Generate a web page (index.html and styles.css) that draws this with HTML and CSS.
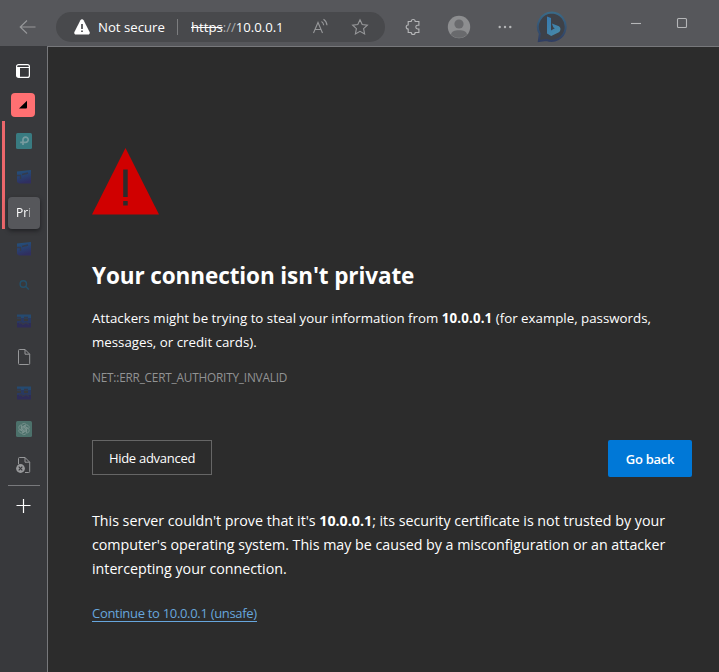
FILE: index.html
```html
<!DOCTYPE html>
<html lang="en">
<head>
<meta charset="utf-8">
<title>Privacy error</title>
<link rel="stylesheet" href="styles.css">
</head>
<body>
<div class="window">
  <header class="toolbar">
    <svg class="back" width="18" height="16" viewBox="0 0 18 16"><path d="M8 1.5 1.2 8 8 14.5M1.500 8H16.500"/></svg>
    <div class="address">
      <svg class="warn" width="18" height="16" viewBox="0 0 18 16"><path fill="#fff" d="M7.400 1.300a1.800 1.800 0 0 1 3.200 0l6 11.700a1.800 1.800 0 0 1-1.600 2.600H3A1.800 1.800 0 0 1 1.400 13z"/><path stroke="#48494c" stroke-width="1.700" d="M9 5v5M9 11.400v1.700"/></svg>
      <span class="status">Not secure</span>
      <span class="bar"></span>
      <span class="url"><s>https</s><i>://</i>10.0.0.1</span>
      <svg class="read" width="17" height="18" viewBox="0 0 17 18"><path d="M1.500 15 6 4.500 10.500 15M3 11.500h6M9.500 3.500c1.400.8 2 2 2.200 3.800M11.500 1.300c2.300 1.500 3.300 3.300 3.500 6"/></svg>
      <svg class="star" width="18" height="18" viewBox="0 0 18 18"><path d="m9 1.700 2.200 4.800 5.200.6-3.800 3.600 1 5.200L9 13.300l-4.600 2.600 1-5.200L1.600 7.100l5.200-.6z"/></svg>
    </div>
    <svg class="puzzle" width="16" height="18" viewBox="0 0 16 18"><path d="M3.200 3.500h3a2 2 0 0 1 4 0h3.700v3.700h-1.200a1.900 1.900 0 0 0 0 3.800h1.200v3.500h-3.700a2 2 0 0 1-4 0h-3V11a2 2 0 0 1 0-4z"/></svg>
    <svg class="avatar" width="24" height="24" viewBox="0 0 24 24"><circle cx="12" cy="12" r="11.200" fill="#8d8e90"/><circle cx="12" cy="9" r="4.600" fill="#696a6d"/><path fill="#696a6d" d="M4 19.400c.7-3 3.200-4.100 8-4.100s7.300 1.100 8 4.100a11.200 11.200 0 0 1-16 0z"/></svg>
    <svg class="dots" width="14" height="4" viewBox="0 0 14 4"><g fill="#b5b6b8"><circle cx="1.700" cy="2" r="1.200"/><circle cx="7" cy="2" r="1.200"/><circle cx="12.300" cy="2" r="1.200"/></g></svg>
    <svg class="bing" width="32" height="32" viewBox="0 0 32 32"><defs><linearGradient id="ring" x2="0" y2="1"><stop stop-color="#396a88"/><stop offset="1" stop-color="#303e61"/></linearGradient><linearGradient id="b" x2=".7" y2="1"><stop stop-color="#3679b0"/><stop offset="1" stop-color="#4789a7"/></linearGradient></defs><path fill="#3d4148" stroke="url(#ring)" stroke-width="2" d="M16 1.500a14.200 14.200 0 1 1-5.500 27.500L2.800 30l1-7.200A14.200 14.200 0 0 1 16 1.500z"/><path fill="url(#b)" d="m11 5.500 4 1.500v12.500l3.800-2.200-1.400-.8-1.500-4 7 2.700c2.400 1.500 1.800 4.800 0 6L15.200 25 11 22.500z"/></svg>
    <svg class="minimize" width="12" height="12" viewBox="0 0 12 12"><path d="M1 6.500h10"/></svg>
    <svg class="maximize" width="12" height="12" viewBox="0 0 12 12"><rect x="1.500" y="1.500" width="9" height="9" rx="1"/></svg>
  </header>
  <div class="body">
    <nav class="tabs">
      <div class="tab panel"><svg width="16" height="16" viewBox="0 0 16 16"><rect x="1.600" y="1.600" width="12.800" height="12.800" rx="2" fill="none" stroke="#fff" stroke-width="1.200"/><path d="M2 4.500h12" stroke="#fff"/><path d="M2 4.500h3v9.500H2z" fill="#fff"/></svg></div>
      <div class="tab group"><span><svg width="10" height="10" viewBox="0 0 10 10"><path d="M1 8.500 9 .8v6.700q0 1-1 1z"/></svg></span></div>
      <div class="grouped">
        <div class="tab"><svg width="16" height="16" viewBox="0 0 16 16"><rect width="16" height="16" rx="1.500" fill="#397b81"/><path d="M7 12V6.800A2.600 2.600 0 1 1 9.500 9.300H4.200" fill="none" stroke="#779b9f" stroke-width="1.700"/></svg></div>
        <div class="tab"><svg width="16" height="16" viewBox="0 0 16 16"><use href="#site"/></svg></div>
        <div class="tab"><span class="current"><span class="label">Pri</span></span></div>
      </div>
      <div class="tab"><svg width="16" height="16" viewBox="0 0 16 16"><defs><linearGradient id="sg" x2=".3" y2="1"><stop stop-color="#24527b"/><stop offset=".4" stop-color="#264775"/><stop offset="1" stop-color="#302f60"/></linearGradient></defs><g id="site"><path fill="url(#sg)" d="M1 2.500 15 1v13.500H3L1 13z"/><path d="M1 6.500h3.500V10M6 5.500l6-1.500" fill="none" stroke="#343b4c" stroke-width="1.300"/></g></svg></div>
      <div class="tab"><svg width="16" height="16" viewBox="0 0 16 16"><path d="m9.800 9.500 3 3" stroke="#24506a" stroke-width="1.400"/><circle cx="7.300" cy="7" r="3.200" fill="none" stroke="#24506a" stroke-width="1.400"/></svg></div>
      <div class="tab"><svg width="16" height="16" viewBox="0 0 16 16"><g id="mail"><path fill="#254a70" d="M1 1.500h14v4H1z"/><path fill="#293961" d="M5 5h3v4H5zM12 5h3v5h-3zM1 8h14v2H1z"/><path fill="#2e2c58" d="M1 10h14v4.500H1z"/><path d="M1 4.500h4M8 4.500h4M3 10.500l2-1 2 2 3-2 3 2" fill="none" stroke="#35394a" stroke-width="1.300"/></g></svg></div>
      <div class="tab"><svg width="16" height="18" viewBox="0 0 16 18"><path class="page" d="M2.500 2.500q0-1 1-1H9l4.700 4.700v9.300q0 1-1 1H3.500q-1 0-1-1zM9 1.500v4.700h4.700"/></svg></div>
      <div class="tab"><svg width="16" height="16" viewBox="0 0 16 16"><use href="#mail"/></svg></div>
      <div class="tab"><svg width="16" height="16" viewBox="0 0 16 16"><rect width="16" height="16" rx="1.500" fill="#4c716b"/><g fill="none" stroke="#819894" stroke-width=".7"><path id="petal" d="M5.300 9.500V5.200a2.700 2.700 0 0 1 4.700-1.900M6.800 8.700V6l3-1.700"/><use href="#petal" transform="rotate(60 8 8)"/><use href="#petal" transform="rotate(120 8 8)"/><use href="#petal" transform="rotate(180 8 8)"/><use href="#petal" transform="rotate(240 8 8)"/><use href="#petal" transform="rotate(300 8 8)"/></g></svg></div>
      <div class="tab"><svg width="16" height="18" viewBox="0 0 16 18"><path class="page" d="M2.500 8V2.500q0-1 1-1H9l4.700 4.700v9.300q0 1-1 1H9M9 1.500v4.700h4.700"/><circle cx="4.500" cy="12.500" r="4.400" fill="#97989a"/><path d="m2.700 10.700 3.600 3.600m0-3.600-3.600 3.600" stroke="#38393c" stroke-width="1.200"/></svg></div>
      <div class="divider"></div>
      <div class="tab add"><svg width="16" height="16" viewBox="0 0 16 16"><path d="M8.500 1v14M1.500 7.500h14" stroke="#fff" stroke-width="1.200"/></svg></div>
    </nav>
    <main class="content">
      <svg class="alert" width="68" height="67" viewBox="0 0 68 67"><path fill="#d00000" d="M33.500 0 67 66.500H0z"/><path fill="#2c2c2c" d="M31.200 21.500h4.500V49h-4.500zM31.200 53h4.500v4.500h-4.500z"/></svg>
      <h1>Your connection isn't private</h1>
      <p class="intro">Attackers might be trying to steal your information from <b>10.0.0.1</b> (for example, passwords,<br>messages, or credit cards).</p>
      <p class="code">NET::ERR_CERT_AUTHORITY_INVALID</p>
      <div class="actions"><button class="secondary">Hide advanced</button><button class="primary">Go back</button></div>
      <p class="detail">This server couldn't prove that it's <b>10.0.0.1</b>; its security certificate is not trusted by your<br>computer's operating system. This may be caused by a misconfiguration or an attacker<br>intercepting your connection.</p>
      <a class="proceed">Continue to 10.0.0.1 (unsafe)</a>
    </main>
  </div>
</div>
</body>
</html>
```
FILE: styles.css
```css
* { box-sizing: border-box; }
body {
  margin: 0;
  font-family: "Open Sans", "Noto Sans", sans-serif;
  color: #fff;
  background: #2c2c2c;
}
svg { display: block; flex: none; }
.window { height: 672px; display: flex; flex-direction: column; overflow: hidden; }
.toolbar {
  height: 46px;
  flex: none;
  display: flex;
  align-items: center;
  padding: 8px 0 0 19px;
  background: #56575b;
}
.back, .read, .star, .puzzle, .minimize, .maximize { fill: none; stroke: #97989a; stroke-width: 1.1; }
.address {
  width: 329px;
  height: 30px;
  margin-left: 19px;
  padding-left: 17px;
  border-radius: 15px;
  display: flex;
  align-items: center;
  background: #48494c;
  font-size: 13.2px;
  white-space: nowrap;
}
.status { width: 79px; margin-left: 7px; }
.bar { width: 1px; height: 16px; background: #7c7d7f; }
.url { width: 92px; margin-left: 13px; letter-spacing: -.03px; }
.url i { font-style: normal; color: #aaabad; }
.read { margin-left: 29px; }
.star { margin-left: 22px; }
.puzzle { margin-left: 20px; stroke: #b5b6b8; }
.avatar { margin-left: 26px; }
.dots { margin-left: 27px; }
.bing { margin-left: 24px; }
.minimize { margin: -8px 0 0 62px; }
.maximize { margin: -8px 0 0 34px; }
.minimize, .maximize { stroke: #b5b6b8; }
.body { flex: 1; display: flex; min-height: 0; }
.tabs { width: 47px; flex: none; background: #38393c; padding-top: 9px; }
.tab { height: 36px; display: flex; align-items: center; justify-content: center; }
.tab > svg { margin-left: 1px; }
.panel { height: 32px; }
.panel > svg, .add > svg { margin-left: -1px; }
.group span {
  width: 24px;
  height: 24px;
  margin-right: 1px;
  border-radius: 4px;
  background: #ff7072;
  display: flex;
  align-items: center;
  justify-content: center;
}
.grouped {
  margin-top: -2px;
  padding-top: 2px;
  background: linear-gradient(#ec676b, #ec676b) 2px 0 / 3px 108px no-repeat;
}
.current {
  width: 32px;
  height: 32px;
  margin-left: 1px;
  padding-left: 8px;
  border-radius: 4px;
  background: #56575b;
  box-shadow: 0 2px 4px #202124;
  font-size: 12px;
  line-height: 31px;
}
.label {
  display: block;
  width: 16px;
  -webkit-mask-image: linear-gradient(90deg, #000 11px, transparent 16px);
  mask-image: linear-gradient(90deg, #000 11px, transparent 16px);
}
.page { fill: none; stroke: #97989a; }
.divider { height: 1px; margin: 2px 7px 2px 8px; background: #78797c; }
.content {
  flex: 1;
  border-top: 1px solid #77787b;
  border-left: 1px solid #77787b;
  padding: 101px 27px 0 44px;
  background: #2c2c2c;
  white-space: nowrap;
}
h1 { margin: 43px 0 0; font-size: 22.5px; line-height: 36px; font-weight: 700; letter-spacing: -.1px; }
p { margin: 0; }
.intro { margin-top: 12px; font-size: 13.3px; line-height: 24px; }
.intro b { letter-spacing: .15px; }
.code { margin-top: 13px; font-size: 11.8px; line-height: 20px; letter-spacing: -.2px; color: #929394; }
.actions { margin-top: 53px; display: flex; justify-content: space-between; align-items: flex-start; }
button { font: 13px "Open Sans", sans-serif; letter-spacing: -.28px; color: #fff; padding: 0; }
.secondary { width: 120px; height: 35px; border: 1px solid #666; background: transparent; }
.primary { width: 84px; height: 37px; border: 0; border-radius: 2px; background: #0078d7; font-weight: 600; }
.detail { margin-top: 32px; font-size: 14.27px; line-height: 24px; letter-spacing: -.02px; }
.proceed {
  display: inline-block;
  margin-top: 24px;
  font-size: 13px;
  line-height: 16px;
  letter-spacing: -.31px;
  color: #67a6dd;
  border-bottom: 1px solid #67a6dd;
}
```
